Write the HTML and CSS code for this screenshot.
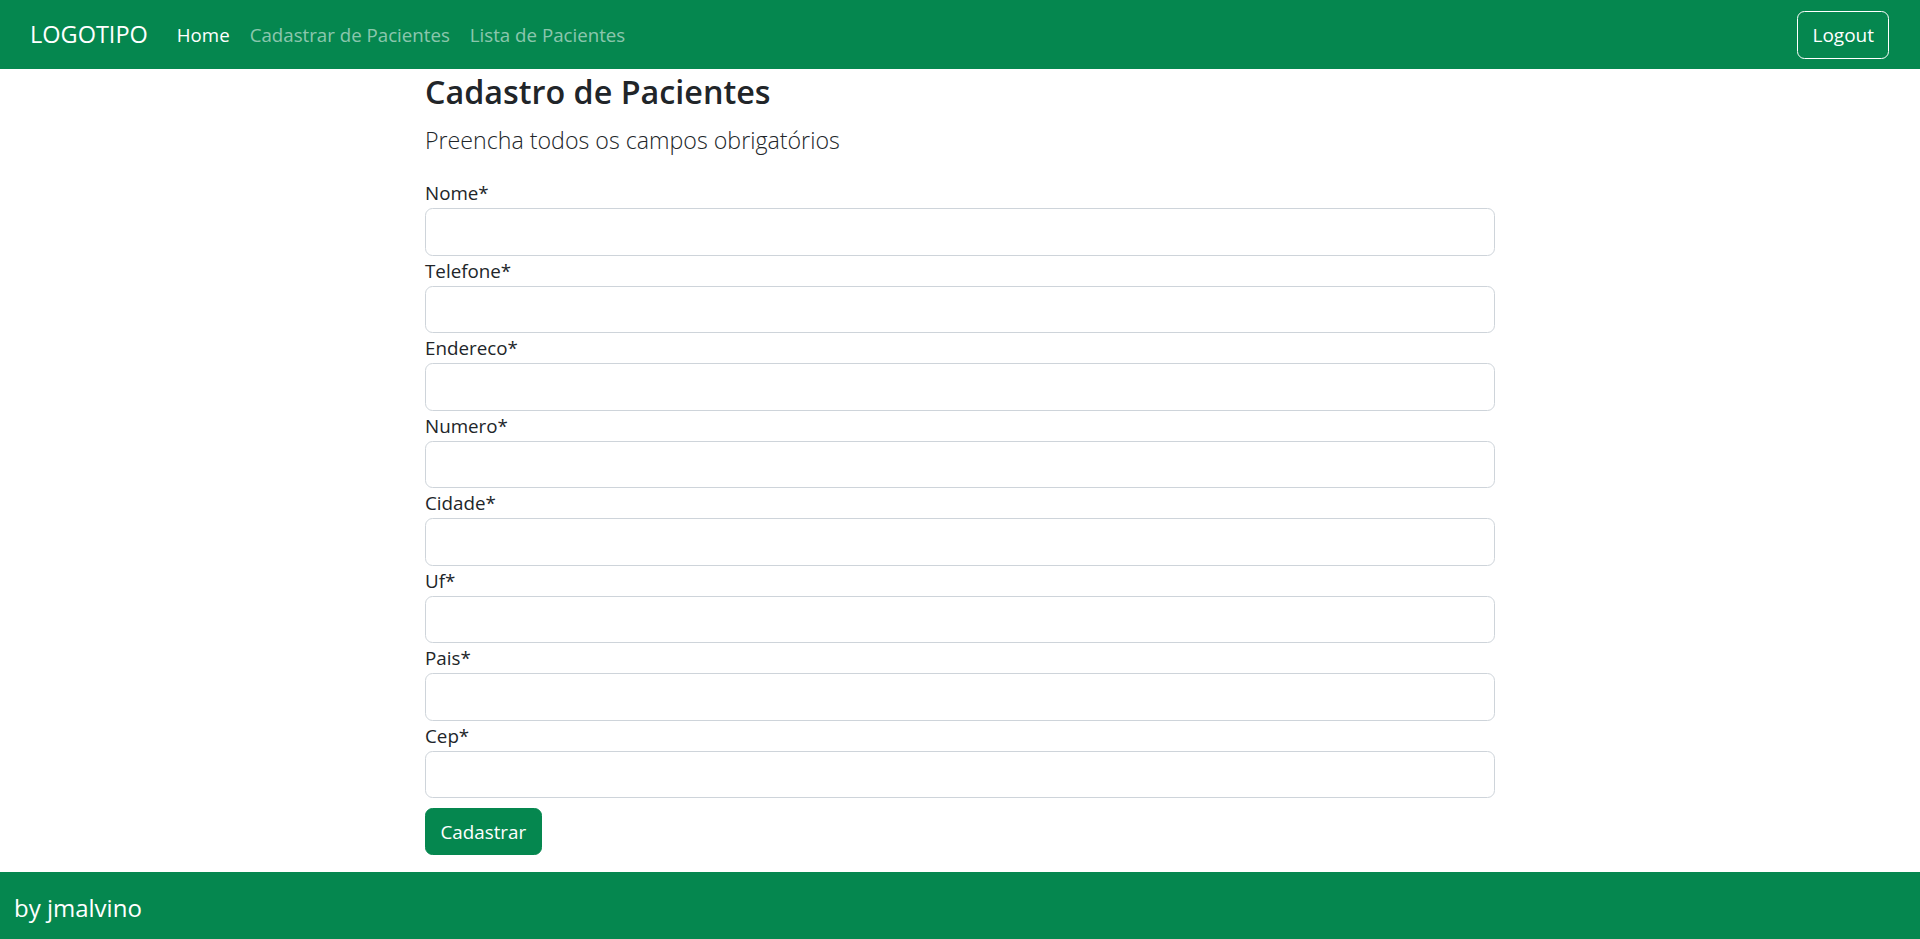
FILE: index.html
```html
<!DOCTYPE html>
<html lang="pt-BR">
<head>
<meta charset="utf-8">
<title>Cadastro de Pacientes</title>
<link rel="stylesheet" href="styles.css">
</head>
<body>
<header class="navbar">
  <a class="brand" href="#">LOGOTIPO</a>
  <nav class="nav-links">
    <a class="nav-link active" href="#">Home</a>
    <a class="nav-link" href="#">Cadastrar de Pacientes</a>
    <a class="nav-link" href="#">Lista de Pacientes</a>
  </nav>
  <button class="btn-logout" type="button">Logout</button>
</header>
<main class="page">
  <div class="content">
    <h1 class="title">Cadastro de Pacientes</h1>
    <p class="lead">Preencha todos os campos obrigatórios</p>
    <form class="form">
      <div class="field"><label class="label">Nome*</label><input class="input" type="text"></div>
      <div class="field"><label class="label">Telefone*</label><input class="input" type="text"></div>
      <div class="field"><label class="label">Endereco*</label><input class="input" type="text"></div>
      <div class="field"><label class="label">Numero*</label><input class="input" type="text"></div>
      <div class="field"><label class="label">Cidade*</label><input class="input" type="text"></div>
      <div class="field"><label class="label">Uf*</label><input class="input" type="text"></div>
      <div class="field"><label class="label">Pais*</label><input class="input" type="text"></div>
      <div class="field"><label class="label">Cep*</label><input class="input" type="text"></div>
      <div class="actions"><button class="btn-submit" type="button">Cadastrar</button></div>
    </form>
  </div>
</main>
<footer class="footer">by jmalvino</footer>
</body>
</html>
```
FILE: styles.css
```css
* { box-sizing: border-box; }

html, body {
  margin: 0;
  padding: 0;
}

body {
  font-family: "Open Sans", "Noto Sans", sans-serif;
  color: #212529;
  background: #ffffff;
  min-height: 100vh;
  display: flex;
  flex-direction: column;
}

.navbar {
  height: 69px;
  background: #05874f;
  display: flex;
  align-items: center;
  padding: 0 31px 0 30px;
}

.brand {
  font-size: 23.5px;
  line-height: 37px;
  color: #ffffff;
  text-decoration: none;
  margin-right: 19px;
}

.nav-links {
  display: flex;
  align-items: center;
}

.nav-link {
  font-size: 18.7px;
  line-height: 30px;
  padding: 0 10px;
  color: rgba(255, 255, 255, 0.55);
  text-decoration: none;
}

.nav-link.active {
  color: #ffffff;
}

.btn-logout {
  margin-left: auto;
  font-family: inherit;
  font-size: 19px;
  line-height: 30px;
  padding: 8px 14px;
  color: #ffffff;
  background: transparent;
  border: 1px solid #ffffff;
  border-radius: 7.5px;
  height: 48px;
}

.page {
  flex: 1;
  padding-bottom: 17px;
}

.content {
  width: 1070px;
  margin: 0 auto;
}

.title {
  font-size: 32.3px;
  font-weight: 600;
  line-height: 36px;
  margin: 4px 0 13px;
}

.lead {
  font-size: 23.2px;
  font-weight: 300;
  line-height: 37.5px;
  margin: 0 0 18.5px;
}

.form {
  display: flex;
  flex-direction: column;
}

.field {
  display: flex;
  flex-direction: column;
}

.label {
  font-size: 18.8px;
  line-height: 30px;
}

.input {
  height: 47.5px;
  width: 100%;
  border: 1px solid #ced4da;
  border-radius: 7.5px;
  background: #ffffff;
  font-family: inherit;
  font-size: 19px;
  padding: 0 15px;
}

.actions {
  margin-top: 10px;
}

.btn-submit {
  font-family: inherit;
  font-size: 18.8px;
  line-height: 30px;
  height: 47px;
  padding: 0 14.5px;
  color: #ffffff;
  background: #05874f;
  border: 1px solid #05874f;
  border-radius: 7.5px;
}

.footer {
  height: 67px;
  background: #05874f;
  color: #ffffff;
  font-size: 24px;
  line-height: 37.5px;
  padding: 17px 14px 0;
}
```
